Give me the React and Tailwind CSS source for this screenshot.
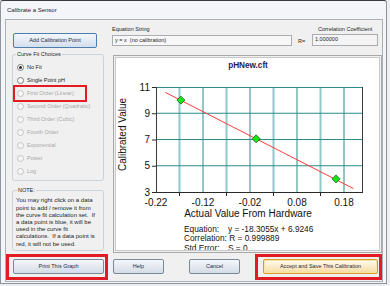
import React from 'react';

const px = (x) => 156 + (x + 0.22) * 470;
const py = (y) => 87 + (11 - y) * 13.125;

const fits = [
  { label: 'No Fit', checked: true },
  { label: 'Single Point pH' },
  { label: 'First Order (Linear)', disabled: true, marked: true },
  { label: 'Second Order (Quadratic)', disabled: true },
  { label: 'Third Order (Cubic)', disabled: true },
  { label: 'Fourth Order', disabled: true },
  { label: 'Exponential', disabled: true },
  { label: 'Power', disabled: true },
  { label: 'Log', disabled: true },
];

const noteLines = [
  'You may right click on a data',
  'point to add / remove it from',
  'the curve fit calculation set.  If',
  'a data point is blue, it will be',
  'used in the curve fit',
  'calculations.  If a data point is',
  'red, it will not be used.',
];

const points = [
  [-0.167, 10.0],
  [-0.007, 7.05],
  [0.163, 4.0],
];

const Button = ({ children, className = '' }) => (
  <div
    className={`h-[15px] flex items-center justify-center rounded-[2px] border text-[5.5px] text-[#1c2a44] ${className}`}
  >
    {children}
  </div>
);

const Radio = ({ label, checked, disabled, marked }) => (
  <div
    className={`h-[13px] ml-[2px] pl-[2px] flex items-center gap-[3px] ${
      marked ? 'w-[70px] outline-2 outline-solid outline-[#e31b23]' : ''
    }`}
  >
    <span
      className={`w-[7px] h-[7px] rounded-full border flex items-center justify-center ${
        disabled ? 'border-[#c4c4c4] bg-[#f6f6f6]' : 'border-[#7c7c7c] bg-white'
      }`}
    >
      {checked && <span className="w-[3px] h-[3px] rounded-full bg-[#2a2a2a]" />}
    </span>
    <span className={`text-[5.5px] whitespace-nowrap ${disabled ? 'text-[#a9a9a9]' : 'text-[#1e1e1e]'}`}>
      {label}
    </span>
  </div>
);

const Chart = () => {
  const verticals = [1, 2, 3, 4, 5, 6, 7, 8];
  const yTicks = [11, 9, 7, 5, 3];
  const xLabels = ['-0.22', '-0.12', '-0.02', '0.08', '0.18'];
  return (
    <svg width="264" height="167" viewBox="116 58 264 167" className="block">
      <text x="248" y="68" textAnchor="middle" fontSize="8.2" fontWeight="bold" fill="#1f2150">
        pHNew.cft
      </text>

      {/* grid */}
      {verticals.map((k) => (
        <line
          key={k}
          x1={156 + 23.5 * k}
          x2={156 + 23.5 * k}
          y1="87"
          y2="192"
          stroke={k % 2 ? '#8cc9c9' : '#2b8b8b'}
          strokeWidth={k % 2 ? 2 : 1}
        />
      ))}
      {[9, 7, 5].map((v) => (
        <line key={v} x1="156" x2="363" y1={py(v)} y2={py(v)} stroke="#2b8b8b" strokeWidth="1" />
      ))}
      <line x1="156" x2="363" y1="87.5" y2="87.5" stroke="#2b8b8b" strokeWidth="1" />
      <line x1="362.5" x2="362.5" y1="87" y2="192" stroke="#3a3a3a" strokeWidth="1" />
      <line x1="156.5" x2="156.5" y1="87" y2="192.5" stroke="#3a3a3a" strokeWidth="1" />
      <line x1="156" x2="363" y1="192.5" y2="192.5" stroke="#2a2a2a" strokeWidth="1" />

      {/* ticks */}
      {yTicks.map((v) => (
        <line key={v} x1="152" x2="156" y1={py(v) + 0.5} y2={py(v) + 0.5} stroke="#2a2a2a" strokeWidth="1" />
      ))}
      {[1, 3, 5, 7].map((k) => (
        <line key={k} x1={156 + 23.5 * k} x2={156 + 23.5 * k} y1="192" y2="196" stroke="#2a2a2a" strokeWidth="1" />
      ))}

      {/* labels */}
      {yTicks.map((v) => (
        <text key={v} x="150" y={py(v) + 3.6} textAnchor="end" fontSize="10" fill="#111">
          {v}
        </text>
      ))}
      {xLabels.map((l, i) => (
        <text key={l} x={156 + 47 * i} y="206" textAnchor="middle" fontSize="10" fill="#111">
          {l}
        </text>
      ))}
      <text
        x="0"
        y="0"
        transform="translate(126 134.5) rotate(-90)"
        textAnchor="middle"
        fontSize="10"
        fill="#111"
      >
        Calibrated Value
      </text>
      <text x="248" y="217" textAnchor="middle" fontSize="10" fill="#111">
        Actual Value From Hardware
      </text>

      {/* fit line and points */}
      <line
        x1={px(-0.2)}
        y1={py(-18.3055 * -0.2 + 6.9246)}
        x2={px(0.2)}
        y2={py(-18.3055 * 0.2 + 6.9246)}
        stroke="#ff3b3b"
        strokeWidth="1"
      />
      {points.map(([x, y]) => {
        const cx = px(x);
        const cy = py(y);
        return (
          <polygon
            key={x}
            points={`${cx},${cy - 4} ${cx + 4},${cy} ${cx},${cy + 4} ${cx - 4},${cy}`}
            fill="#19e619"
            stroke="#1d5a1d"
            strokeWidth="0.8"
          />
        );
      })}
    </svg>
  );
};

export default function App() {
  return (
    <div className="w-[390px] h-[286px] bg-[#eceef1] overflow-hidden font-['Liberation_Sans',Arial,sans-serif]">
      <div className="w-[387px] h-[284px] border border-[#8e949c] border-t-[#3c3c3c] rounded-t-[3px] bg-[#f3f5f8] flex flex-col">
        <div className="h-[18px] pl-[6px] flex items-center text-[6px] text-[#1e1e1e]">Calibrate a Sensor</div>

        <div className="ml-[4px] w-[378px] h-[263px] border border-[#a9b0b8] bg-[#f0f0f0] flex flex-col">
          <div className="flex h-[234px]">
            {/* left column */}
            <div className="ml-[6px] w-[92px] pt-[13px] flex flex-col">
              <Button className="ml-[1px] w-[84px] border-[#4a7fb0] bg-gradient-to-b from-[#f3f7fc] to-[#d3deec]">
                Add Calibration Point
              </Button>

              <fieldset className="mt-[2px] border border-[#cbd2d8] rounded-[3px] pt-[2.5px] pb-[2.5px]">
                <legend className="ml-[3px] px-[1px] text-[5.5px] leading-[8px] text-[#1e1e1e]">
                  Curve Fit Choices
                </legend>
                {fits.map((f) => (
                  <Radio key={f.label} {...f} />
                ))}
              </fieldset>

              <fieldset className="mt-[5px] border border-[#cbd2d8] rounded-[3px] pt-[3.4px] pb-[2px] pl-[3px]">
                <legend className="ml-[1px] px-[1px] text-[5.5px] leading-[8px] text-[#1e1e1e]">NOTE:</legend>
                {noteLines.map((l) => (
                  <div key={l} className="text-[6px] leading-[7.2px] whitespace-pre text-[#1e1e1e]">
                    {l}
                  </div>
                ))}
              </fieldset>
            </div>

            {/* right column */}
            <div className="ml-[8px] w-[270px] pt-[5px] flex flex-col">
              <div className="flex h-[8px] leading-[8px] text-[5.5px] text-[#1e1e1e]">
                <span className="w-[206px]">Equation String</span>
                <span>Correlation Coefficient</span>
              </div>
              <div className="flex mt-[1px] h-[12px]">
                <div className="mt-[1px] w-[180px] h-[11px] border border-[#abadb3] bg-[#f7f7f7] pl-[2px] text-[5.5px] leading-[9px] text-[#1e1e1e] whitespace-pre">
                  y = x  (no calibration)
                </div>
                <span className="ml-[6px] w-[14px] text-[5.5px] leading-[14px] text-[#1e1e1e]">R=</span>
                <div className="w-[66px] h-[12px] border border-[#abadb3] bg-[#f4f4f4] pl-[2px] text-[5.5px] leading-[9px] text-[#1e1e1e]">
                  1.000000
                </div>
              </div>

              <div className="mt-[9px] ml-[1px] w-[269px] h-[198px] border border-[#a8a8a8] p-[1px]">
                <div className="h-full border border-[#c9c9c9] bg-white overflow-hidden">
                  <Chart />
                  <div className="pl-[68px] text-[8.3px] leading-[9.3px] text-[#111]">
                    <div className="flex">
                      <span className="w-[44px]">Equation:</span>
                      <span>y = -18.3055x + 6.9246</span>
                    </div>
                    <div>Correlation: R = 0.999889</div>
                    <div className="flex">
                      <span className="w-[44px]">Std Error:</span>
                      <span>S = 0</span>
                    </div>
                  </div>
                </div>
              </div>
            </div>
          </div>

          {/* bottom buttons */}
          <div className="flex h-[26px]">
            <div className="w-[102px] h-[26px] border-[3px] border-[#e31b23] pl-[4px] pt-[2px]">
              <Button className="w-[91px] border-[#7b8898] bg-gradient-to-b from-[#f5f7fa] to-[#d5dce6]">
                Print This Graph
              </Button>
            </div>
            <Button className="ml-[5px] mt-[5px] w-[51px] border-[#7b8898] bg-gradient-to-b from-[#f5f7fa] to-[#d5dce6]">
              Help
            </Button>
            <Button className="ml-[25px] mt-[5px] w-[51px] border-[#7b8898] bg-gradient-to-b from-[#f5f7fa] to-[#d5dce6]">
              Cancel
            </Button>
            <div className="ml-[15px] w-[127px] h-[26px] border-[3px] border-[#e31b23] pl-[5px] pt-[2px]">
              <Button className="w-[115px] border-[#d99a2b] bg-gradient-to-b from-[#fffaf0] to-[#f6dca0] shadow-[inset_0_0_0_1px_#fbe3a6]">
                Accept and Save This Calibration
              </Button>
            </div>
          </div>
        </div>
      </div>
    </div>
  );
}
